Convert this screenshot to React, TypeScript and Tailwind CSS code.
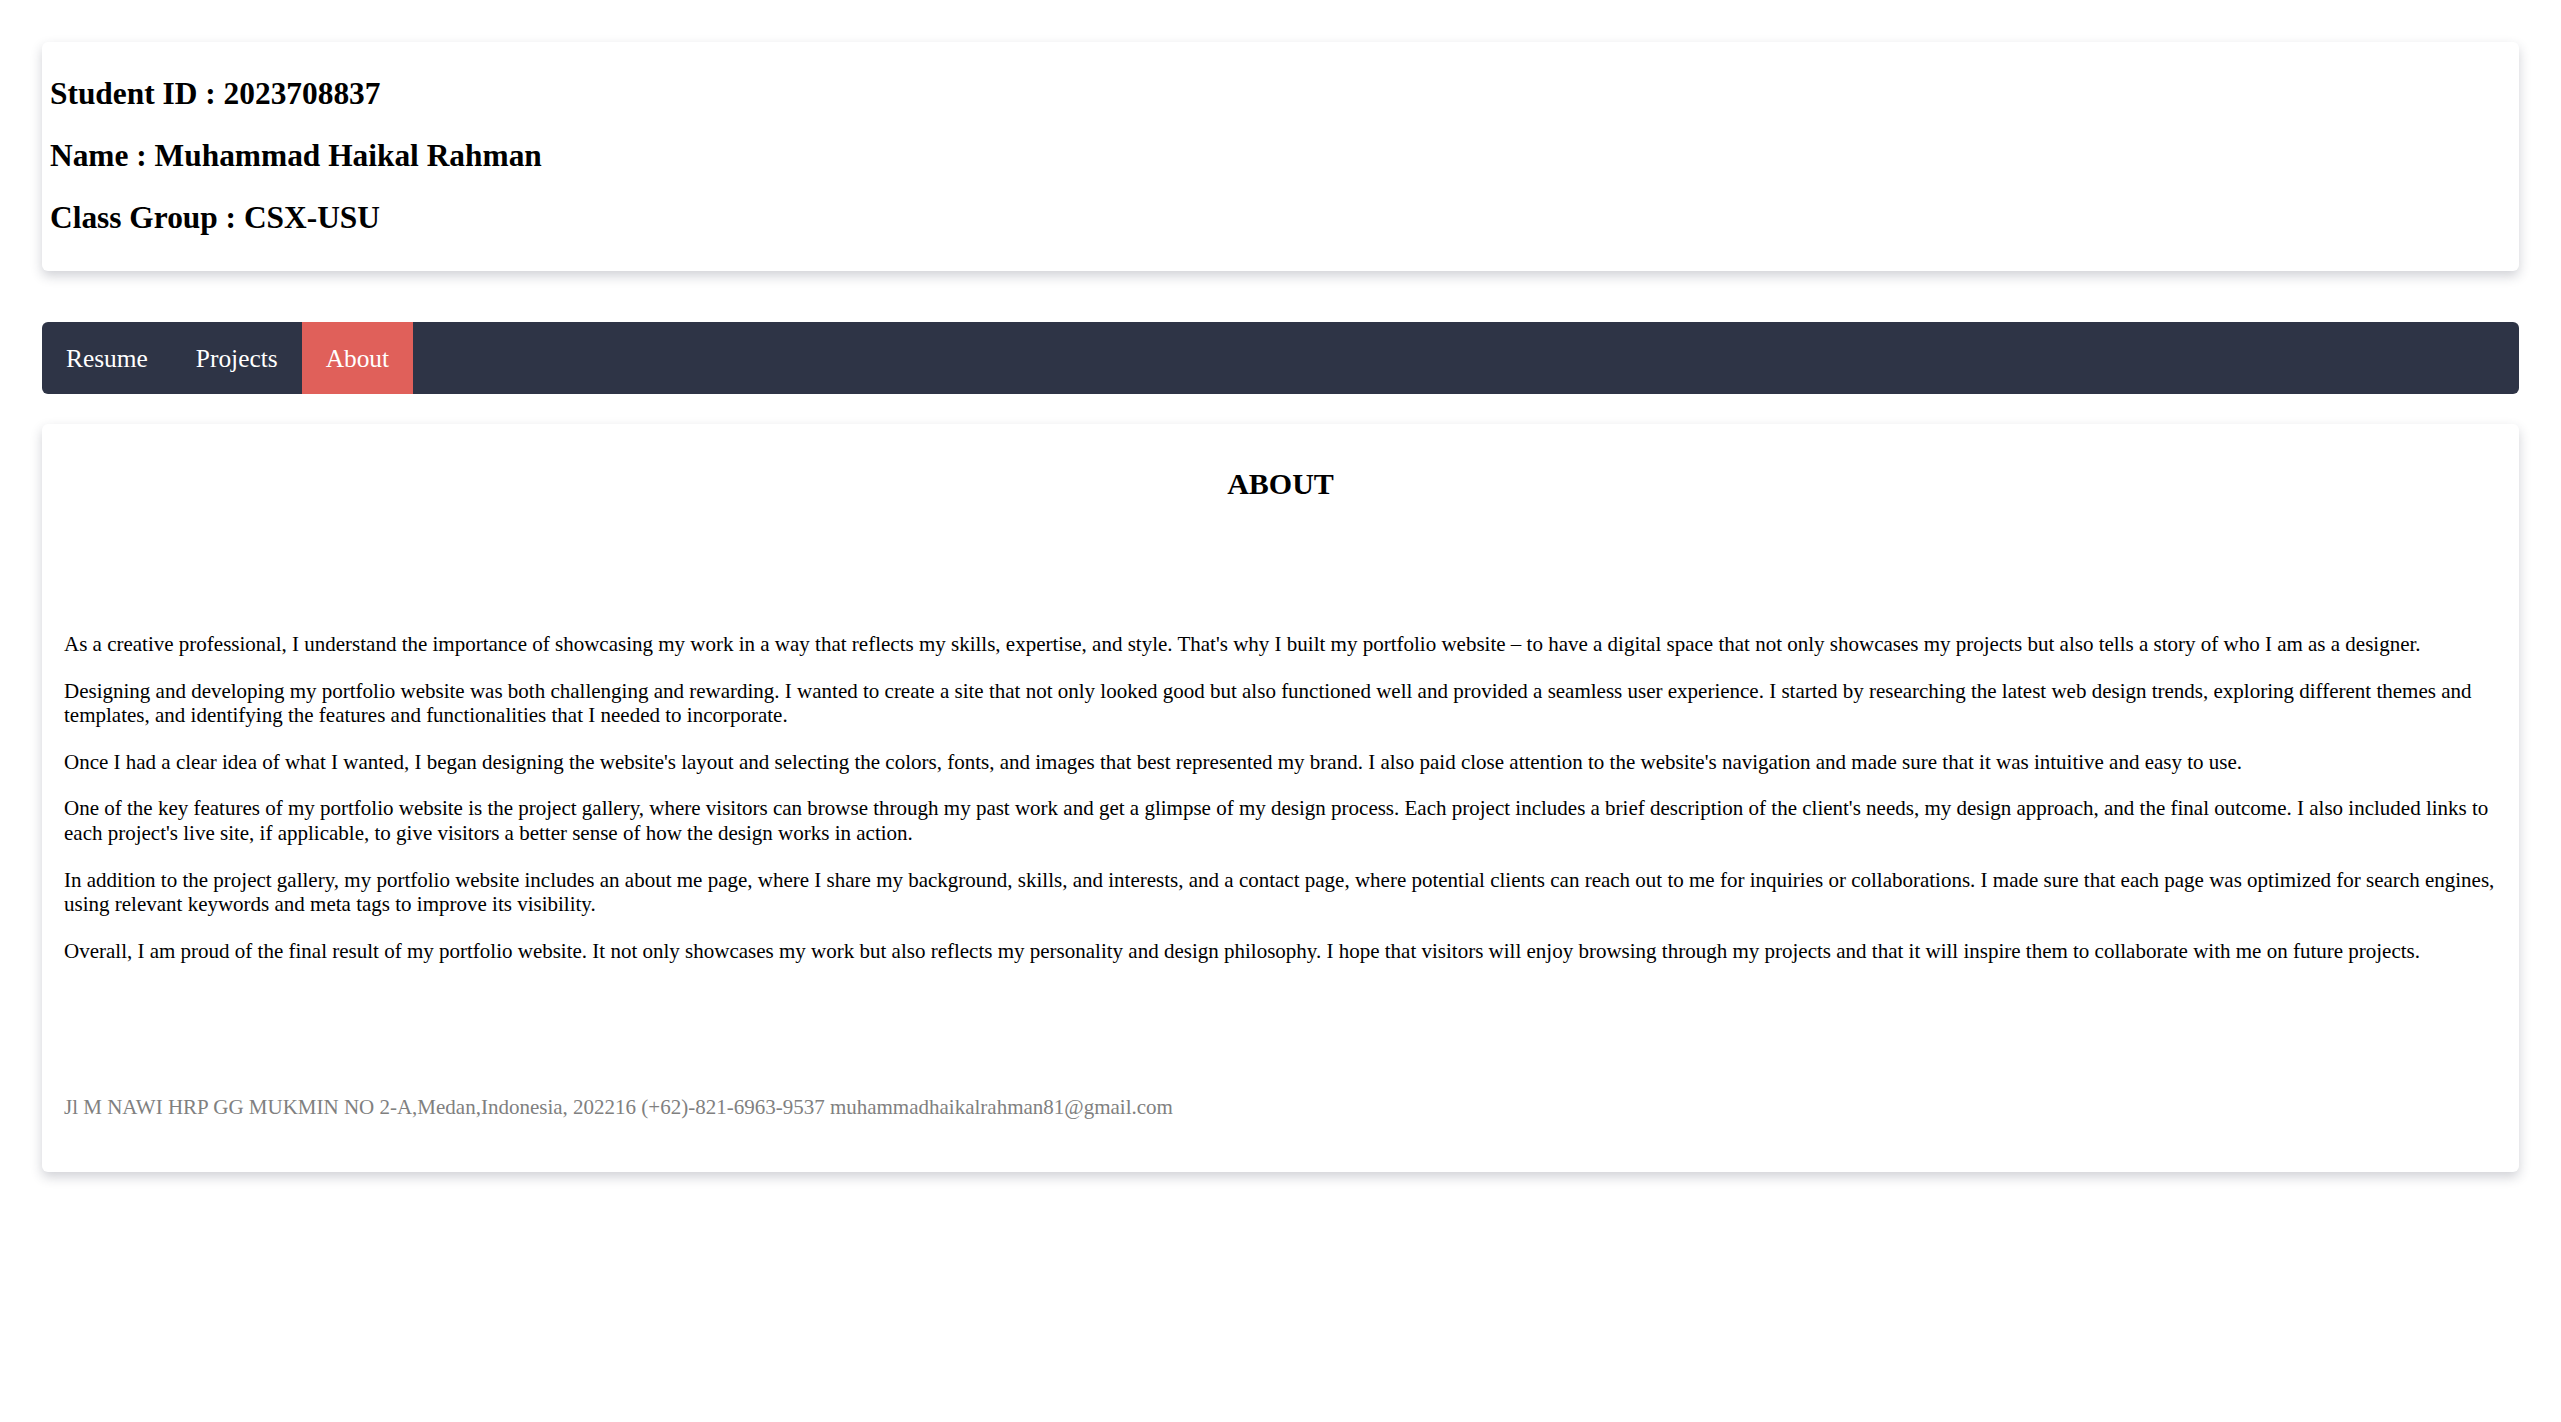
const paragraphs = [
  "As a creative professional, I understand the importance of showcasing my work in a way that reflects my skills, expertise, and style. That's why I built my portfolio website – to have a digital space that not only showcases my projects but also tells a story of who I am as a designer.",
  "Designing and developing my portfolio website was both challenging and rewarding. I wanted to create a site that not only looked good but also functioned well and provided a seamless user experience. I started by researching the latest web design trends, exploring different themes and templates, and identifying the features and functionalities that I needed to incorporate.",
  "Once I had a clear idea of what I wanted, I began designing the website's layout and selecting the colors, fonts, and images that best represented my brand. I also paid close attention to the website's navigation and made sure that it was intuitive and easy to use.",
  "One of the key features of my portfolio website is the project gallery, where visitors can browse through my past work and get a glimpse of my design process. Each project includes a brief description of the client's needs, my design approach, and the final outcome. I also included links to each project's live site, if applicable, to give visitors a better sense of how the design works in action.",
  "In addition to the project gallery, my portfolio website includes an about me page, where I share my background, skills, and interests, and a contact page, where potential clients can reach out to me for inquiries or collaborations. I made sure that each page was optimized for search engines, using relevant keywords and meta tags to improve its visibility.",
  "Overall, I am proud of the final result of my portfolio website. It not only showcases my work but also reflects my personality and design philosophy. I hope that visitors will enjoy browsing through my projects and that it will inspire them to collaborate with me on future projects.",
];

const navItems = ["Resume", "Projects", "About"];

export default function App() {
  const active = "About";

  return (
    <div className="min-h-[1422px] bg-white px-[42px] pt-[42px] font-['Liberation_Serif',serif] text-black">
      <header className="flex flex-col gap-[26px] rounded-[6px] bg-white px-[8px] pb-[35px] pt-[34px] shadow-[0_5px_12px_rgba(40,45,70,0.22)]">
        <h2 className="text-[31.4px] font-bold leading-[36px]">Student ID : 2023708837</h2>
        <h2 className="text-[31.4px] font-bold leading-[36px]">Name : Muhammad Haikal Rahman</h2>
        <h2 className="text-[31.4px] font-bold leading-[36px]">Class Group : CSX-USU</h2>
      </header>

      <nav className="mt-[51px] flex h-[72px] overflow-hidden rounded-[6px] bg-[#2e3446]">
        {navItems.map((item) => (
          <a
            key={item}
            href="#"
            className={`flex items-center px-[24px] text-[25.4px] text-white ${item === active ? "bg-[#e0605a]" : ""}`}
          >
            {item}
          </a>
        ))}
      </nav>

      <main className="mt-[30px] flex flex-col rounded-[6px] bg-white px-[22px] pb-[52px] pt-[42px] shadow-[0_5px_12px_rgba(40,45,70,0.22)]">
        <h2 className="text-center text-[30px] font-bold leading-[36px]">ABOUT</h2>
        <div className="mt-[130px] flex flex-col gap-[22px] text-[21px] leading-[24.6px]">
          {paragraphs.map((text) => (
            <p key={text.slice(0, 20)}>{text}</p>
          ))}
        </div>
        <p className="mt-[132px] text-[21px] leading-[24.6px] text-[#808080]">
          Jl M NAWI HRP GG MUKMIN NO 2-A,Medan,Indonesia, 202216 (+62)-821-6963-9537 muhammadhaikalrahman81@gmail.com
        </p>
      </main>
    </div>
  );
}
